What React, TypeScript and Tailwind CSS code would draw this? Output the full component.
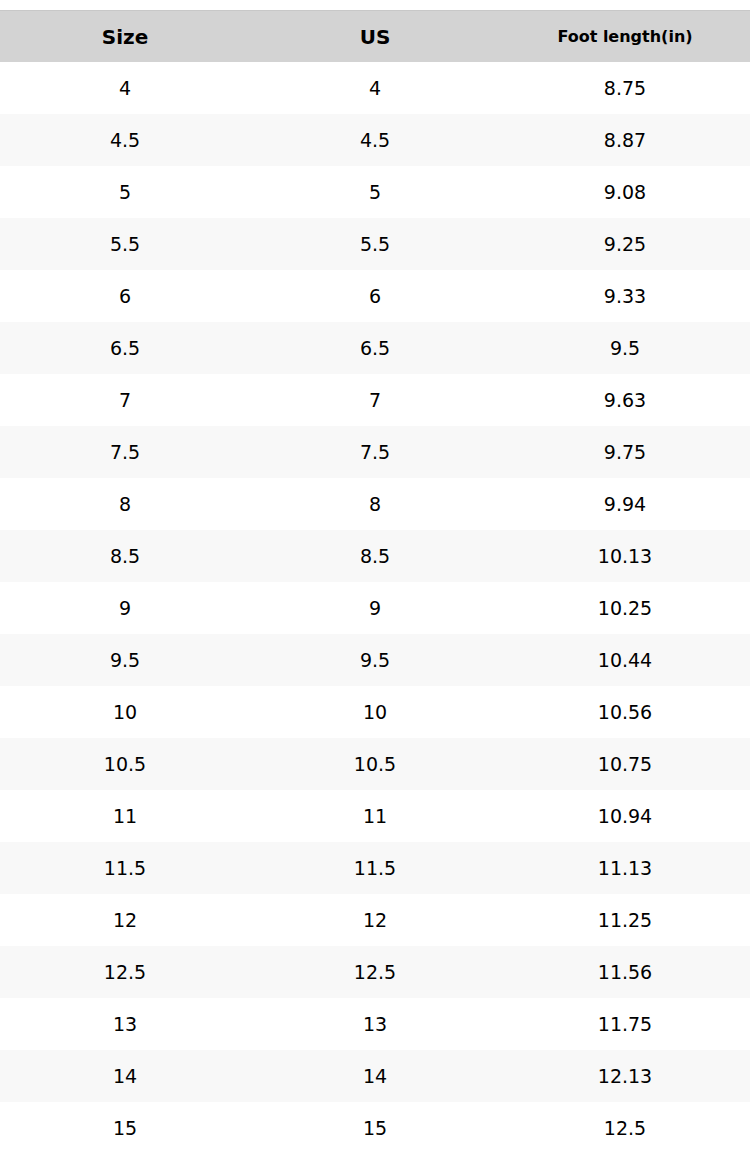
const rows: [string, string, string][] = [
  ["4", "4", "8.75"],
  ["4.5", "4.5", "8.87"],
  ["5", "5", "9.08"],
  ["5.5", "5.5", "9.25"],
  ["6", "6", "9.33"],
  ["6.5", "6.5", "9.5"],
  ["7", "7", "9.63"],
  ["7.5", "7.5", "9.75"],
  ["8", "8", "9.94"],
  ["8.5", "8.5", "10.13"],
  ["9", "9", "10.25"],
  ["9.5", "9.5", "10.44"],
  ["10", "10", "10.56"],
  ["10.5", "10.5", "10.75"],
  ["11", "11", "10.94"],
  ["11.5", "11.5", "11.13"],
  ["12", "12", "11.25"],
  ["12.5", "12.5", "11.56"],
  ["13", "13", "11.75"],
  ["14", "14", "12.13"],
  ["15", "15", "12.5"],
];

export default function App() {
  return (
    <div className="w-[750px] bg-white pt-[10px] text-black [font-family:'DejaVu_Sans',sans-serif]">
      {/* Header */}
      <div className="grid h-[52px] grid-cols-3 items-center border-t border-[#c8c8c8] bg-[#d3d3d3] font-bold">
        <div className="text-center text-[20px]">Size</div>
        <div className="text-center text-[20px]">US</div>
        <div className="text-center text-[16px]">Foot length(in)</div>
      </div>
      {rows.map((r, i) => (
        <div
          key={i}
          className={`grid h-[52px] grid-cols-3 items-center text-[19px] ${i % 2 === 1 ? "bg-[#f8f8f8]" : "bg-white"}`}
        >
          {r.map((c, j) => (
            <div key={j} className="text-center">
              {c}
            </div>
          ))}
        </div>
      ))}
    </div>
  );
}
